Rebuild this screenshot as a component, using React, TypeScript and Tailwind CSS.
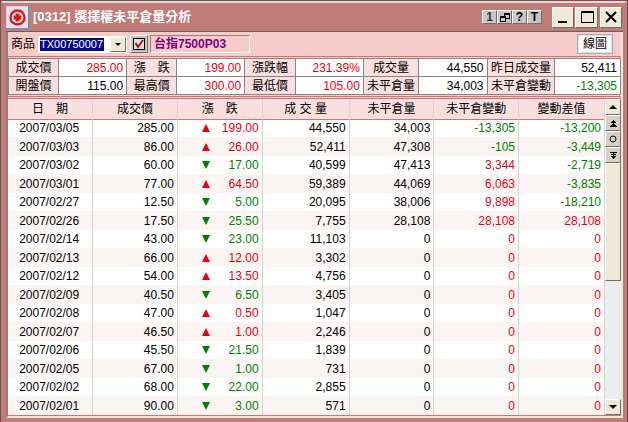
import React from "react";
import clsx from "clsx";

type Cell = { label: string; value: string; tone: string };

const RED = "text-[#e60012]";
const GREEN = "text-[#008000]";

const summary: Cell[][] = [
  [
    { label: "成交價", value: "285.00", tone: RED },
    { label: "漲　跌", value: "199.00", tone: RED },
    { label: "漲跌幅", value: "231.39%", tone: RED },
    { label: "成交量", value: "44,550", tone: "text-black" },
    { label: "昨日成交量", value: "52,411", tone: "text-black" },
  ],
  [
    { label: "開盤價", value: "115.00", tone: "text-black" },
    { label: "最高價", value: "300.00", tone: RED },
    { label: "最低價", value: "105.00", tone: RED },
    { label: "未平倉量", value: "34,003", tone: "text-black" },
    { label: "未平倉變動", value: "-13,305", tone: GREEN },
  ],
];

const headers = ["日　期", "成交價", "漲　跌", "成 交 量", "未平倉量", "未平倉變動", "變動差值"];

// date, price, direction, change, volume, open interest, OI change, difference
const rows = [
  ["2007/03/05", "285.00", "up", "199.00", "44,550", "34,003", "-13,305", "-13,200"],
  ["2007/03/03", "86.00", "up", "26.00", "52,411", "47,308", "-105", "-3,449"],
  ["2007/03/02", "60.00", "down", "17.00", "40,599", "47,413", "3,344", "-2,719"],
  ["2007/03/01", "77.00", "up", "64.50", "59,389", "44,069", "6,063", "-3,835"],
  ["2007/02/27", "12.50", "down", "5.00", "20,095", "38,006", "9,898", "-18,210"],
  ["2007/02/26", "17.50", "down", "25.50", "7,755", "28,108", "28,108", "28,108"],
  ["2007/02/14", "43.00", "down", "23.00", "11,103", "0", "0", "0"],
  ["2007/02/13", "66.00", "up", "12.00", "3,302", "0", "0", "0"],
  ["2007/02/12", "54.00", "up", "13.50", "4,756", "0", "0", "0"],
  ["2007/02/09", "40.50", "down", "6.50", "3,405", "0", "0", "0"],
  ["2007/02/08", "47.00", "up", "0.50", "1,047", "0", "0", "0"],
  ["2007/02/07", "46.50", "up", "1.00", "2,246", "0", "0", "0"],
  ["2007/02/06", "45.50", "down", "21.50", "1,839", "0", "0", "0"],
  ["2007/02/05", "67.00", "down", "1.00", "731", "0", "0", "0"],
  ["2007/02/02", "68.00", "down", "22.00", "2,855", "0", "0", "0"],
  ["2007/02/01", "90.00", "down", "3.00", "571", "0", "0", "0"],
];

const raised =
  "flex items-center justify-center border border-t-white border-l-white border-r-[#716f64] border-b-[#716f64]";

const signTone = (v: string) => (v.startsWith("-") ? GREEN : RED);

const AppLogo = () => (
  <svg width="23" height="23" viewBox="0 0 23 23" aria-hidden="true">
    <rect width="23" height="23" fill="#6d86c4" />
    <rect width="22" height="22" fill="#c9d6f2" />
    <rect x="1" y="1" width="21" height="21" fill="#e4e4f0" />
    <circle cx="11.5" cy="11.5" r="7" fill="#fff" stroke="#f01010" strokeWidth="2.4" />
    <path d="M9.5 7.5h4v2h2v4h-2v2h-4v-2h-2v-4h2z" fill="#f01010" />
  </svg>
);

const TitleBar = () => (
  <header className="flex h-[29px] items-center border-b border-[#6b6257] bg-[#c17b78] pr-px">
    <AppLogo />
    <h1 className="ml-1 flex-1 truncate text-[13px] font-bold text-white">[0312] 選擇權未平倉量分析</h1>
    <div className="flex">
      <button className={clsx(raised, "h-[14px] w-[15px] bg-[#c8c6c6] text-xs font-bold text-[#333]")}>1</button>
      <button aria-label="切換視窗" className={clsx(raised, "h-[14px] w-[15px] bg-[#c8c6c6]")}>
        <svg width="10" height="9" viewBox="0 0 10 9" shapeRendering="crispEdges">
          <path d="M4 0h6v6H4z" />
          <path d="M5 2h4v3H5z" fill="#c8c6c6" />
          <path d="M0 3h6v6H0z" />
          <path d="M1 5h4v3H1z" fill="#c8c6c6" />
        </svg>
      </button>
      <button className={clsx(raised, "h-[14px] w-[15px] bg-[#c8c6c6] text-xs font-bold")}>?</button>
      <button className={clsx(raised, "h-[14px] w-[15px] bg-[#c8c6c6] text-xs font-bold")}>T</button>
    </div>
    <div className="ml-2.5 flex">
      <button aria-label="最小化" className={clsx(raised, "h-[21px] w-[22px] bg-[#ece9d8]")}>
        <svg width="16" height="16" viewBox="0 0 16 16">
          <path d="M3 12h9v2H3z" />
        </svg>
      </button>
      <button aria-label="最大化" className={clsx(raised, "ml-px h-[21px] w-[23px] bg-[#ece9d8]")}>
        <svg width="16" height="16" viewBox="0 0 16 16">
          <path d="M2 2h13v12H2zM3 4v9h11V4z" fillRule="evenodd" />
        </svg>
      </button>
      <button aria-label="關閉" className={clsx(raised, "ml-0.5 h-[21px] w-[22px] bg-[#ece9d8]")}>
        <svg width="16" height="16" viewBox="0 0 16 16" stroke="#000" strokeWidth="2">
          <path d="M3 3l10 10M13 3L3 13" />
        </svg>
      </button>
    </div>
  </header>
);

const Toolbar = () => (
  <div className="flex h-6 items-center bg-[#f6cccb] pr-2 pl-[3px]">
    <label htmlFor="symbol">商品</label>
    <div className="relative ml-[3px] h-[17px] w-[89px] bg-white">
      <select
        id="symbol"
        defaultValue="TX00750007"
        className="ml-0.5 block h-[17px] w-[64px] appearance-none overflow-hidden border-y-2 border-white bg-[#0a0a80] text-[11px] leading-[13px] text-white"
      >
        <option>TX00750007</option>
      </select>
      <span className="pointer-events-none absolute top-px right-px flex h-[15px] w-4 items-center justify-center border border-t-white border-l-white border-r-[#716f64] border-b-[#716f64] bg-[#ece9d8]">
        <svg width="6" height="3" viewBox="0 0 6 3">
          <path d="M0 0h6L3 3z" />
        </svg>
      </span>
    </div>
    <label className="relative ml-[3px] flex h-[18px] w-[18px] items-center justify-center border border-t-white border-l-white border-r-[#716f64] border-b-[#716f64] bg-[#c8c6c6]">
      <input
        type="checkbox"
        defaultChecked
        aria-label="鎖定商品"
        className="h-3 w-3 appearance-none border border-black bg-[#e4e0e0]"
      />
      <svg className="pointer-events-none absolute" width="12" height="12" viewBox="0 0 12 12" fill="none">
        <path d="M2.500 5l2.500 4 5-7" stroke="#a01818" strokeWidth="2" />
      </svg>
    </label>
    <output className="ml-0.5 h-[18px] w-[100px] border border-t-[#8a8484] border-r-white border-b-white border-l-[#8a8484] pl-[3px] text-xs leading-4 font-bold text-[#800080]">
      台指7500P03
    </output>
    <button className="ml-auto h-5 w-9 border border-[#9fb0b0] bg-white text-xs shadow-[inset_0_0_0_1px_#dce4e4]">線圖</button>
  </div>
);

const Summary = () => (
  <table className="w-full table-fixed border-collapse border border-[#8a8484]">
    <colgroup>
      <col className="w-[8.2%]" />
      <col className="w-[11.1%]" />
      <col className="w-[8.2%]" />
      <col className="w-[11.1%]" />
      <col className="w-[8.3%]" />
      <col className="w-[11.1%]" />
      <col className="w-[9%]" />
      <col className="w-[11.2%]" />
      <col className="w-[11.1%]" />
      <col />
    </colgroup>
    <tbody>
      {summary.map((line, i) => (
        <tr key={i} className="h-[18px]">
          {line.map((c) => (
            <React.Fragment key={c.label}>
              <th scope="row" className="border border-[#8a8484] bg-[#f9e0df] p-0 font-normal whitespace-nowrap">
                {c.label}
              </th>
              <td className={clsx("border border-[#8a8484] bg-white p-0 pr-[3px] text-right", c.tone)}>{c.value}</td>
            </React.Fragment>
          ))}
        </tr>
      ))}
    </tbody>
  </table>
);

const Arrow = ({ dir }: { dir: string }) => (
  <svg width="8" height="8" viewBox="0 0 8 8" aria-label={dir}>
    {dir === "up" ? <path d="M4 0l4 8H0z" fill="#e60012" /> : <path d="M0 0h8L4 8z" fill="#008000" />}
  </svg>
);

const History = () => (
  <table className="min-w-0 flex-1 table-fixed border-collapse">
    <colgroup>
      <col className="w-[14.2%]" />
      <col className="w-[14.2%]" />
      <col className="w-[14.2%]" />
      <col className="w-[14.6%]" />
      <col className="w-[14.2%]" />
      <col className="w-[14.2%]" />
      <col />
    </colgroup>
    <thead>
      <tr className="h-5 border-b border-[#cf7476] bg-[#f9e0df]">
        {headers.map((h) => (
          <th key={h} scope="col" className="border-r border-[#d9d2d2] border-b-[#cf7476] p-0 font-normal">
            {h}
          </th>
        ))}
      </tr>
    </thead>
    <tbody>
      {rows.map(([date, price, dir, change, volume, oi, oiChange, diff]) => (
        <tr key={date} className="h-[18px] bg-white even:h-[19px] even:bg-[#faf5f3] [&>td]:border-r [&>td]:border-[#d4d4d4] [&>td]:p-0 [&>td]:pr-[3px] [&>td]:text-right">
          <td>
            <span className="block pr-2.5">{date}</span>
          </td>
          <td>{price}</td>
          <td className={dir === "up" ? RED : GREEN}>
            <span className="flex items-center justify-between pl-6">
              <Arrow dir={dir} />
              {change}
            </span>
          </td>
          <td>{volume}</td>
          <td>{oi}</td>
          <td className={signTone(oiChange)}>{oiChange}</td>
          <td className={signTone(diff)}>{diff}</td>
        </tr>
      ))}
    </tbody>
  </table>
);

const ScrollBar = () => (
  <div className="flex w-4 flex-col bg-[#ededed]">
    <button aria-label="上移" className={clsx(raised, "h-4 bg-[#ece9d8]")}>
      <svg width="8" height="4" viewBox="0 0 8 4">
        <path d="M4 0l4 4H0z" />
      </svg>
    </button>
    <button aria-label="第一頁" className={clsx(raised, "h-4 bg-[#d4d0c8]")}>
      <svg width="7" height="7" viewBox="0 0 7 7">
        <path d="M3 0h1v1h1v1h1v1H4v1h1v1h1v1h1v1H0V6h1V5h1V4h1V3H1V2h1V1h1z" />
      </svg>
    </button>
    <button aria-label="定位" className={clsx(raised, "h-4 bg-[#d4d0c8]")}>
      <svg width="8" height="8" viewBox="0 0 8 8" fill="none" stroke="#000">
        <circle cx="4" cy="4" r="3" />
      </svg>
    </button>
    <button aria-label="最後頁" className={clsx(raised, "h-4 bg-[#d4d0c8]")}>
      <svg width="7" height="7" viewBox="0 0 7 7">
        <path d="M0 0h7v1H4v1h2v1H1V2h2V1H0zM3 3h1v1h2v1H5v1H4v1H3V6H2V5H1V4h2z" />
      </svg>
    </button>
    <div className={clsx(raised, "h-[118px] bg-[#ece9d8]")} />
    <button aria-label="下移" className={clsx(raised, "mt-auto h-4 bg-[#ece9d8]")}>
      <svg width="8" height="4" viewBox="0 0 8 4">
        <path d="M0 0h8L4 4z" />
      </svg>
    </button>
  </div>
);

export default function App() {
  return (
    <div className="border border-[#6b5555] bg-[#c17b78] font-['Liberation_Sans','Noto_Sans_CJK_TC',sans-serif] text-xs leading-4 text-black">
      <div className="border-2 border-[#c17b78] border-t-[#e8d4d0] pr-0.5 pb-0.5 pl-[3px]">
        <TitleBar />
        <main className="border-2 border-t-0 border-[#8a8478] border-r-[#ece9d8] border-b-[#ece9d8] bg-[#f6cccb]">
          <Toolbar />
          <div className="border-y border-[#cf7476] py-px">
            <Summary />
          </div>
          <div className="mt-px flex border-y border-[#cf7476]">
            <History />
            <ScrollBar />
          </div>
        </main>
      </div>
    </div>
  );
}
